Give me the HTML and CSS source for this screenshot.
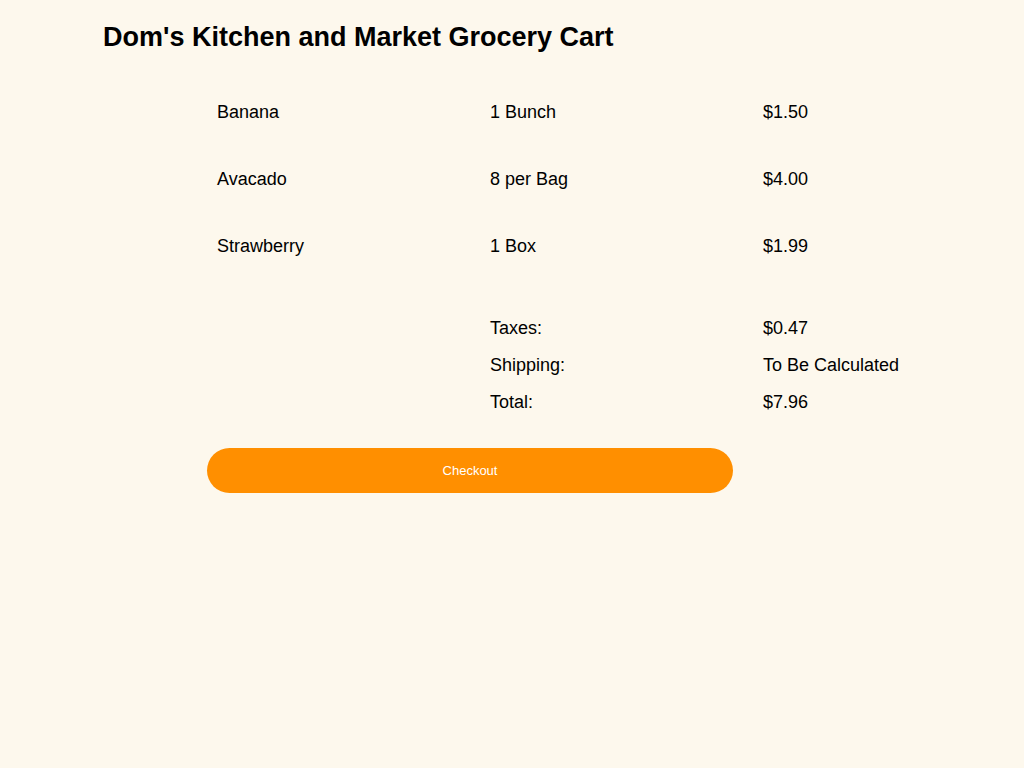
FILE: index.html
```html
<!DOCTYPE html>
<html lang="en">
<head>
<meta charset="utf-8">
<title>Dom's Kitchen and Market Grocery Cart</title>
<link rel="stylesheet" href="styles.css">
</head>
<body>
<h1 class="title">Dom's Kitchen and Market Grocery Cart</h1>
<section class="cart">
  <div class="items">
    <div class="row"><span>Banana</span><span>1 Bunch</span><span>$1.50</span></div>
    <div class="row"><span>Avacado</span><span>8 per Bag</span><span>$4.00</span></div>
    <div class="row"><span>Strawberry</span><span>1 Box</span><span>$1.99</span></div>
  </div>
  <div class="totals">
    <div class="row"><span></span><span>Taxes:</span><span>$0.47</span></div>
    <div class="row"><span></span><span>Shipping:</span><span>To Be Calculated</span></div>
    <div class="row"><span></span><span>Total:</span><span>$7.96</span></div>
  </div>
  <button class="checkout" type="button">Checkout</button>
</section>
</body>
</html>
```

FILE: styles.css
```css
html, body {
  margin: 0;
  padding: 0;
  background: #fdf8ed;
}
body {
  font-family: "Liberation Sans", Arial, Helvetica, sans-serif;
  color: #000;
  min-height: 768px;
}
.title {
  margin: 0;
  padding: 22px 0 0 103px;
  font-size: 27px;
  line-height: 30px;
  font-weight: bold;
}
.cart {
  padding-left: 207px;
}
.items, .totals {
  display: flex;
  flex-direction: column;
  padding-left: 10px;
}
.items {
  margin-top: 50px;
  gap: 47px;
}
.totals {
  margin-top: 62px;
  gap: 17px;
}
.row {
  display: grid;
  grid-template-columns: 273px 273px 273px;
  font-size: 18px;
  line-height: 20px;
}
.checkout {
  display: block;
  margin-top: 36px;
  width: 526px;
  height: 45px;
  border: none;
  border-radius: 23px;
  background: #ff8f00;
  color: #fff;
  font-family: "Liberation Sans", Arial, Helvetica, sans-serif;
  font-size: 13px;
  padding: 0;
  cursor: pointer;
}
```
